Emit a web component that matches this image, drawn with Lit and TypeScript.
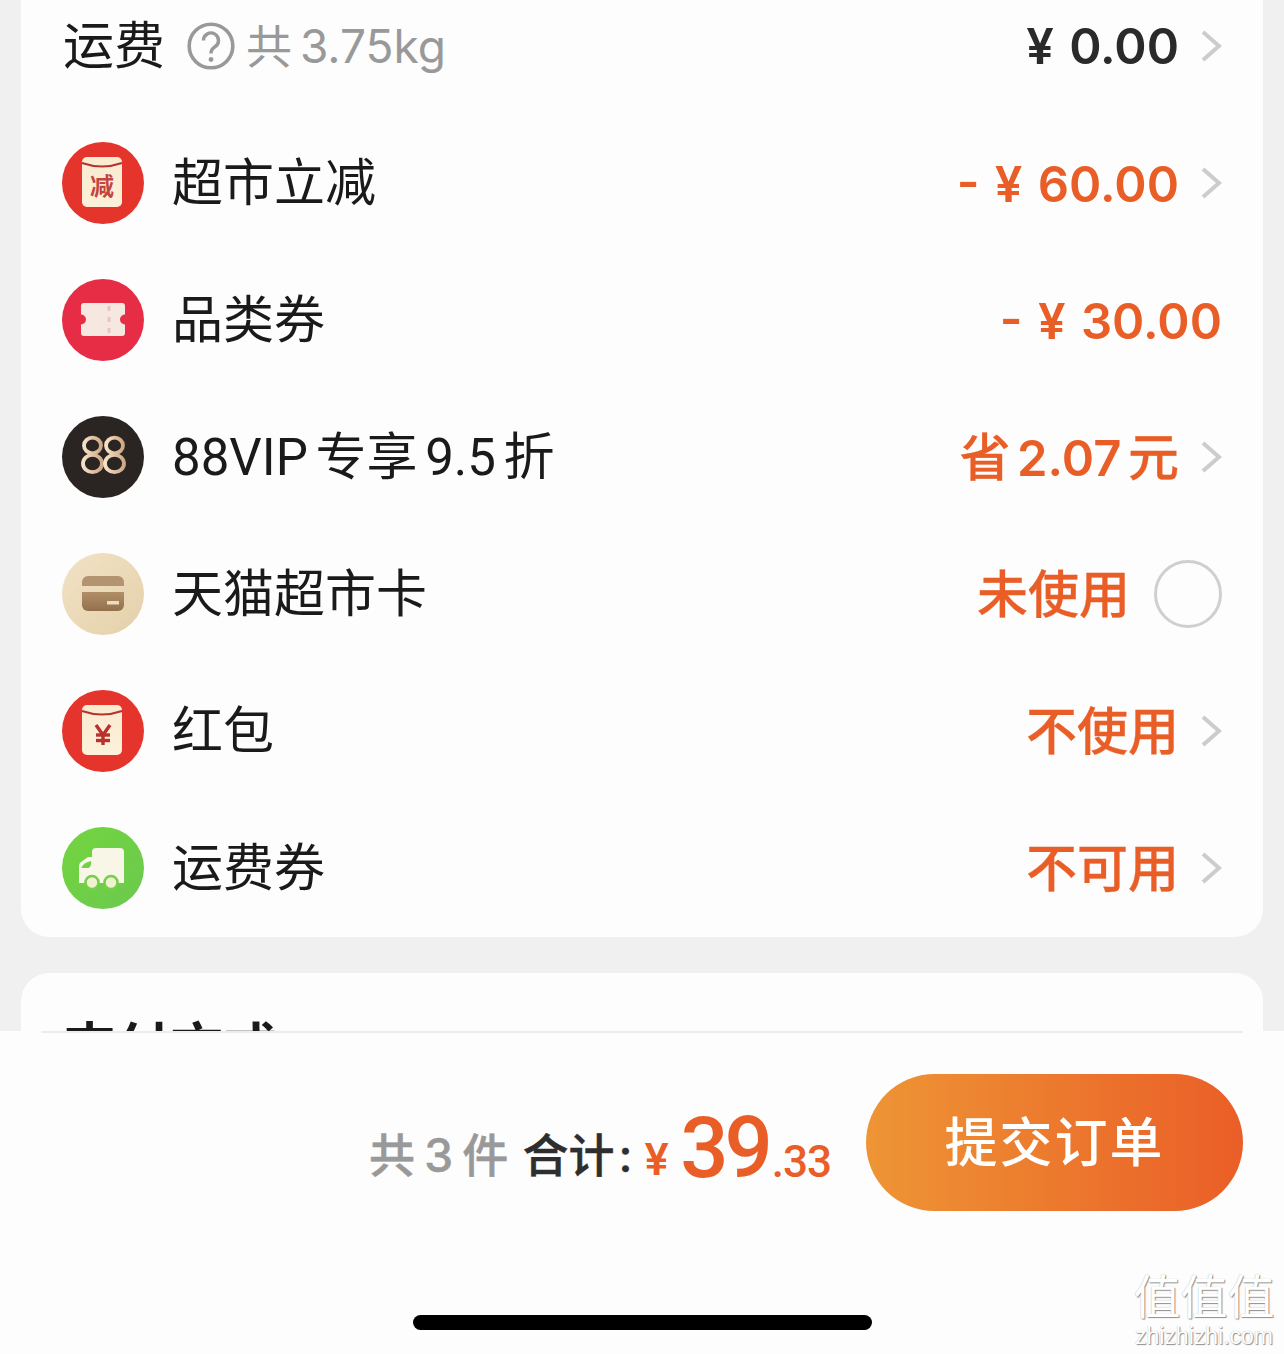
import { LitElement, html, css, svg } from "lit";
import { customElement } from "lit/decorators.js";

const envelope = (mark: unknown, bg: string, top: number) => svg`
  <svg viewBox="0 0 82 82" width="82" height="82">
    <defs><linearGradient id="env${top}" x1="0" y1="0" x2="0" y2="1"><stop offset="0" stop-color="#f9ebd0"/><stop offset="1" stop-color="#fdf0da"/></linearGradient></defs>
    <circle cx="41" cy="41" r="41" fill="${bg}"/>
    <rect x="20" y="${top}" width="40" height="50" rx="5" fill="url(#env${top})"/>
    <path d="M20 ${top + 6} Q40 ${top + 13} 60 ${top + 6}" fill="none" stroke="#b5332c" stroke-width="2"/>
    ${mark}
  </svg>`;

const icons: Record<string, unknown> = {
  jian: envelope(
    svg`<text x="40" y="53" text-anchor="middle" font-size="24" font-weight="700" fill="#c4443e" font-family="'Noto Sans CJK SC',sans-serif">减</text>`,
    "#e5342c",
    15
  ),
  ticket: svg`
  <svg viewBox="0 0 82 82" width="82" height="82">
    <circle cx="41" cy="41" r="41" fill="#e72d45"/>
    <path d="M22 24 H60 a3 3 0 0 1 3 3 V35.500 a5 5 0 0 0 0 10 V54 a3 3 0 0 1 -3 3 H22 a3 3 0 0 1 -3 -3 V45.500 a5 5 0 0 0 0 -10 V27 a3 3 0 0 1 3 -3 Z" fill="#f7e7e1"/>
    <path d="M47 27 V55" stroke="#e8c5bf" stroke-width="3" stroke-dasharray="5 6"/>
  </svg>`,
  vip: svg`
  <svg viewBox="0 0 82 82" width="82" height="82">
    <defs><linearGradient id="g88" x1="0" y1="0" x2="1" y2="0"><stop offset="0" stop-color="#f6e2c8"/><stop offset="1" stop-color="#cfa884"/></linearGradient></defs>
    <circle cx="41" cy="41" r="41" fill="#2a2523"/>
    <g fill="none" stroke="url(#g88)" stroke-width="3.800">
      <ellipse cx="30.500" cy="29.500" rx="8.500" ry="7.800"/>
      <ellipse cx="30.500" cy="47.500" rx="9.500" ry="8.700"/>
      <ellipse cx="52.500" cy="29.500" rx="8.500" ry="7.800"/>
      <ellipse cx="52.500" cy="47.500" rx="9.500" ry="8.700"/>
    </g>
  </svg>`,
  card: svg`
  <svg viewBox="0 0 82 82" width="82" height="82">
    <defs>
      <linearGradient id="gc" x1="0" y1="0" x2="1" y2="1"><stop offset="0" stop-color="#f2e3c6"/><stop offset="1" stop-color="#e4cfa9"/></linearGradient>
      <linearGradient id="gb" x1="0" y1="0" x2="0" y2="1"><stop offset="0" stop-color="#b08f68"/><stop offset="1" stop-color="#92704c"/></linearGradient>
    </defs>
    <circle cx="41" cy="41" r="41" fill="url(#gc)"/>
    <path d="M20 33 V29 a6 6 0 0 1 6 -6 H56 a6 6 0 0 1 6 6 V33 Z" fill="#b39470"/>
    <path d="M20 39 H62 V52 a6 6 0 0 1 -6 6 H26 a6 6 0 0 1 -6 -6 Z" fill="url(#gb)"/>
    <rect x="45" y="48" width="12" height="3.500" fill="#ecdcc0"/>
  </svg>`,
  hongbao: envelope(
    svg`<g fill="none" stroke="#b8312c" stroke-width="3.400"><path d="M34 35 L41 45 L48 35"/><path d="M41 45 V55"/><path d="M34 45 H48"/><path d="M34 50.500 H48"/></g>`,
    "#e5342c",
    15
  ),
  truck: svg`
  <svg viewBox="0 0 82 82" width="82" height="82">
    <defs><linearGradient id="gt" x1="0" y1="0" x2="1" y2="1"><stop offset="0" stop-color="#72d53f"/><stop offset="1" stop-color="#6cc94e"/></linearGradient></defs>
    <circle cx="41" cy="41" r="41" fill="url(#gt)"/>
    <path d="M30 25 a4 4 0 0 1 4 -4 H58 a4 4 0 0 1 4 4 V56 H17 V39 a5 5 0 0 1 2 -4 L26 30 H30 Z" fill="#f8f6e6"/>
    <path d="M19.500 41 q1 -5 9.500 -7 q1 5 -2.500 7 Z" fill="#76cf4a"/>
    <circle cx="30" cy="55.500" r="6.500" fill="#eef2cf" stroke="#76cf4a" stroke-width="2.500"/>
    <circle cx="49" cy="55.500" r="6.500" fill="#eef2cf" stroke="#76cf4a" stroke-width="2.500"/>
  </svg>`,
};

const chevron = html`<svg class="chev" viewBox="0 0 22 34" width="22" height="34"><path d="M3 3 L19 17 L3 31" fill="none" stroke="#cccccc" stroke-width="4"/></svg>`;

type Row = { icon: string; label: unknown; value: unknown; arrow: boolean; radio?: boolean };
const rows: Row[] = [
  { icon: "jian", label: "超市立减", value: html`<span class="num">- ¥ 60.00</span>`, arrow: true },
  { icon: "ticket", label: "品类券", value: html`<span class="num">- ¥ 30.00</span>`, arrow: false },
  { icon: "vip", label: "88VIP 专享 9.5 折", value: html`省 <span class="num">2.07</span> 元`, arrow: true },
  { icon: "card", label: "天猫超市卡", value: "未使用", arrow: false, radio: true },
  { icon: "hongbao", label: "红包", value: "不使用", arrow: true },
  { icon: "truck", label: "运费券", value: "不可用", arrow: true },
];

@customElement("app-root")
export class AppRoot extends LitElement {
  static styles = css`
    :host {
      display: block;
      width: 1284px;
      height: 1354px;
      overflow: hidden;
      background: #f0f0f0;
      color: #1a1a1a;
      font-family: "Inter", "Noto Sans CJK SC", sans-serif;
      position: relative;
    }
    .scroll {
      height: 1031px;
      overflow: hidden;
      padding: 0 21px;
    }
    .card {
      background: #fdfdfd;
      border-radius: 0 0 28px 28px;
      margin-top: -23px;
      padding-bottom: 1px;
    }
    .row {
      height: 137px;
      padding: 0 41px;
      display: flex;
      align-items: center;
      font-size: 51px;
      line-height: 60px;
    }
    .row.first { padding-left: 42px; }
    .icon { width: 82px; height: 82px; margin-right: 28px; flex: none; display: block; }
    .label { white-space: nowrap; word-spacing: -5px; padding-top: 3px; font-family: "Roboto", "Noto Sans CJK SC", sans-serif; }
    .spacer { flex: 1; }
    .hint { display: flex; align-items: center; margin-left: 22px; color: #999; font-size: 46px; word-spacing: -5px; }
    .hint svg { margin-right: 11px; }
    .value { color: #e95e27; font-weight: 500; white-space: nowrap; word-spacing: -7px; padding-top: 3px; -webkit-text-stroke: 0.300px #e95e27; }
    .num { font-size: 49px; font-weight: 600; word-spacing: 3px; -webkit-text-stroke: 0; }
    .fee { color: #2a2a2a; font-weight: 600; font-size: 49px; word-spacing: 3px; padding-top: 3px; }
    .chev { margin-left: 21px; flex: none; }
    .radio {
      width: 68px; height: 68px; box-sizing: border-box;
      border: 3px solid #cfcfcf; border-radius: 50%;
      margin-left: 24px; flex: none;
    }
    .pay {
      background: #fdfdfd;
      border-radius: 28px 28px 0 0;
      margin-top: 36px;
      height: 80px;
      padding: 45px 42px 0;
      font-size: 53.500px;
      font-weight: 700;
      line-height: 60px;
    }
    .bar {
      height: 323px;
      background: #fdfdfd;
      padding: 0 41px;
      position: relative;
    }
    .rule { height: 2px; background: #ececec; }
    .total {
      display: flex;
      align-items: center;
      justify-content: flex-end;
      padding-top: 41px;
    }
    .sum { white-space: nowrap; margin-right: 35px; padding-top: 10px; font-size: 0; }
    .count { color: #999; font-size: 46px; font-weight: 500; word-spacing: -3px; margin-right: 14px; vertical-align: 5px; -webkit-text-stroke: 0.500px #999; }
    .heji { color: #2e2e2e; font-size: 46px; font-weight: 500; margin-right: 12px; vertical-align: 5px; -webkit-text-stroke: 0.400px #2e2e2e; }
    .colon { margin-left: 4px; }
    .yen { color: #e95e27; font-size: 44px; font-weight: 600; margin-right: 11px; vertical-align: 2px; }
    .big { color: #e95e27; font-family: "Roboto", sans-serif; font-size: 85px; font-weight: 500; letter-spacing: -4px; line-height: 90px; }
    .cents { color: #e95e27; font-family: "Roboto", sans-serif; font-size: 44px; font-weight: 500; letter-spacing: -1px; margin-left: 3px; }
    .submit {
      width: 377px; height: 137px; border-radius: 69px; box-sizing: border-box; padding-bottom: 8px;
      display: flex; align-items: center; justify-content: center;
      background: linear-gradient(90deg, #ee9535, #ea5e27);
      color: #fff; font-size: 53px; font-weight: 500; letter-spacing: 2px;
    }
    .home {
      position: absolute; left: 413px; top: 284px;
      width: 459px; height: 15px; border-radius: 8px; background: #000;
    }
    .mark {
      position: absolute; right: 8px; bottom: 6px; width: 144px;
      text-align: center; color: #fff; line-height: 1;
      text-shadow: 1px 1px 1px #8f8f8f, 0 0 1px #aaaaaa;
      font-family: "Noto Sans CJK SC", sans-serif;
    }
    .mark .zh { font-size: 47px; font-weight: 400; display: block; height: 56px; line-height: 50px; white-space: nowrap; }
    .mark .en { font-size: 23px; font-family: "Liberation Sans", sans-serif; display: block; white-space: nowrap; }
  `;

  render() {
    return html`
      <div class="scroll">
        <div class="card">
          <div class="row first">
            <span>运费</span>
            <span class="hint">
              <svg viewBox="0 0 48 48" width="48" height="48">
                <circle cx="24" cy="24" r="21.800" fill="none" stroke="#999" stroke-width="3.600"/>
                <path d="M16.500 18.500 a7.500 7.500 0 1 1 11.500 6.300 q-4 2.500 -4 6.700" fill="none" stroke="#999" stroke-width="3.400"/>
                <circle cx="24" cy="37.500" r="2.400" fill="#999"/>
              </svg>
              共 3.75kg
            </span>
            <span class="spacer"></span>
            <span class="fee">¥ 0.00</span>
            ${chevron}
          </div>
          ${rows.map(
            (r) => html`
              <div class="row">
                <span class="icon">${icons[r.icon]}</span>
                <span class="label">${r.label}</span>
                <span class="spacer"></span>
                <span class="value">${r.value}</span>
                ${r.arrow ? chevron : ""}
                ${r.radio ? html`<span class="radio"></span>` : ""}
              </div>
            `
          )}
        </div>
        <div class="pay">支付方式</div>
      </div>
      <div class="bar">
        <div class="rule"></div>
        <div class="total">
          <div class="sum">
            <span class="count">共 3 件</span>
            <span class="heji">合计<span class="colon">:</span></span>
            <span class="yen">¥</span>
            <span class="big">39</span>
            <span class="cents">.33</span>
          </div>
          <div class="submit">提交订单</div>
        </div>
        <div class="home"></div>
      </div>
      <div class="mark"><span class="zh">值值值</span><span class="en">zhizhizhi.com</span></div>
    `;
  }
}
